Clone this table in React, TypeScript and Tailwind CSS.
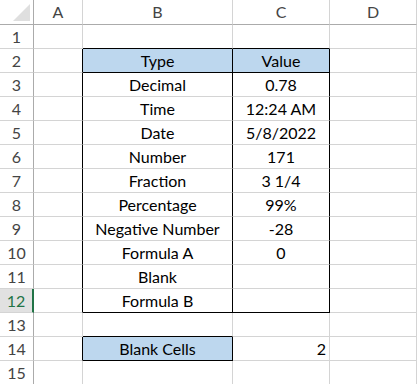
import React from "react";

const GRID = "#d4d4d4";
const EDGE = "#ababab";
const BLACK = "#000000";

type Row = { b?: string; c?: string; fill?: boolean; cRight?: boolean };

const rows: Row[] = [
  {},
  { b: "Type", c: "Value", fill: true },
  { b: "Decimal", c: "0.78" },
  { b: "Time", c: "12:24 AM" },
  { b: "Date", c: "5/8/2022" },
  { b: "Number", c: "171" },
  { b: "Fraction", c: "3 1/4" },
  { b: "Percentage", c: "99%" },
  { b: "Negative Number", c: "-28" },
  { b: "Formula A", c: "0" },
  { b: "Blank", c: "" },
  { b: "Formula B", c: "" },
  {},
  { b: "Blank Cells", c: "2", cRight: true },
  {},
];

function Cell({
  children,
  right = GRID,
  bottom = GRID,
  fill,
  align = "center",
}: {
  children?: React.ReactNode;
  right?: string;
  bottom?: string;
  fill?: boolean;
  align?: "center" | "right";
}) {
  return (
    <div
      className={`flex items-center h-full pt-[1px] border-r border-b whitespace-nowrap overflow-visible ${
        align === "right" ? "justify-end pr-[3px]" : "justify-center"
      } ${fill ? "bg-[#bdd7ee]" : "bg-white"}`}
      style={{ borderRightColor: right, borderBottomColor: bottom }}
    >
      {children}
    </div>
  );
}

export default function App() {
  return (
    <div className="w-[417px] h-[384px] bg-white overflow-hidden font-['Lato','Open_Sans',sans-serif] text-[16px] text-black">
      <div className="grid grid-cols-[34px_49px_150px_97px_1fr] grid-rows-[25px_repeat(15,24px)]">
        {/* corner */}
        <div className="relative border-r border-b border-[#ababab] bg-white">
          <div className="absolute right-[3px] bottom-[3px] w-0 h-0 border-l-[17px] border-l-transparent border-b-[17px] border-b-[#dfdfdf]" />
        </div>
        {["A", "B", "C", "D"].map((l) => (
          <div
            key={l}
            className="flex items-center justify-center border-r border-b text-[#444]"
            style={{ borderRightColor: GRID, borderBottomColor: EDGE }}
          >
            {l}
          </div>
        ))}

        {rows.map((row, i) => {
          const r = i + 1;
          const inTable = r >= 2 && r <= 12;
          const sel = r === 12;
          const aRight = inTable || r === 14 ? BLACK : GRID;
          const bRight = inTable || r === 14 ? BLACK : GRID;
          const bBottom = [1, 2, 12, 13, 14].includes(r) ? BLACK : GRID;
          const cRight = inTable ? BLACK : GRID;
          const cBottom = [1, 2, 12].includes(r) ? BLACK : GRID;
          return (
            <React.Fragment key={r}>
              <div
                className={`flex items-center justify-center pt-[1px] border-b ${
                  sel
                    ? "bg-[#e1e1e1] text-[#217346] border-r-2 border-r-[#217346]"
                    : "bg-white text-[#444] border-r border-r-[#ababab]"
                }`}
                style={{ borderBottomColor: GRID }}
              >
                {r}
              </div>
              <Cell right={aRight} />
              <Cell right={bRight} bottom={bBottom} fill={row.fill || r === 14}>
                {row.b}
              </Cell>
              <Cell
                right={cRight}
                bottom={cBottom}
                fill={row.fill}
                align={row.cRight ? "right" : "center"}
              >
                {row.c}
              </Cell>
              <Cell />
            </React.Fragment>
          );
        })}
      </div>
    </div>
  );
}
